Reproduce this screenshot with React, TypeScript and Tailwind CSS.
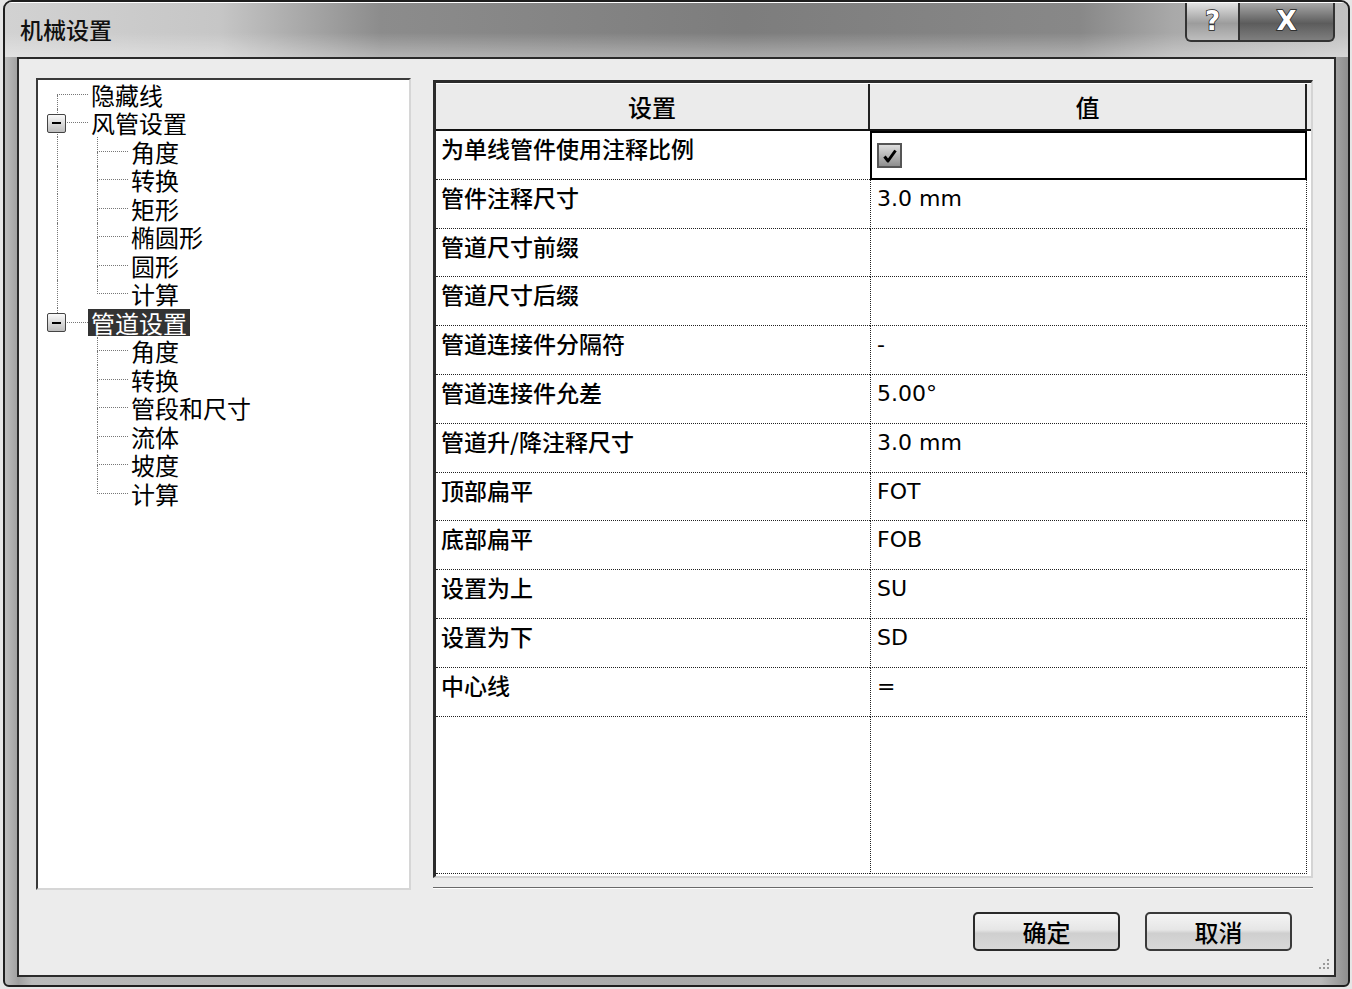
import React from "react";

// tree rows for the left panel
type TreeRow = {
  label: string;
  depth: number;
  top?: boolean; // vertical line goes up
  bottom?: boolean; // vertical line goes down
  parentLine?: boolean; // root line keeps running on depth-1 rows
  box?: boolean;
  selected?: boolean;
};

const treeRows: TreeRow[] = [
  { label: "隐藏线", depth: 0, top: false, bottom: true },
  { label: "风管设置", depth: 0, top: true, bottom: true, box: true },
  { label: "角度", depth: 1, top: true, bottom: true, parentLine: true },
  { label: "转换", depth: 1, top: true, bottom: true, parentLine: true },
  { label: "矩形", depth: 1, top: true, bottom: true, parentLine: true },
  { label: "椭圆形", depth: 1, top: true, bottom: true, parentLine: true },
  { label: "圆形", depth: 1, top: true, bottom: true, parentLine: true },
  { label: "计算", depth: 1, top: true, bottom: false, parentLine: true },
  { label: "管道设置", depth: 0, top: true, bottom: false, box: true, selected: true },
  { label: "角度", depth: 1, top: true, bottom: true },
  { label: "转换", depth: 1, top: true, bottom: true },
  { label: "管段和尺寸", depth: 1, top: true, bottom: true },
  { label: "流体", depth: 1, top: true, bottom: true },
  { label: "坡度", depth: 1, top: true, bottom: true },
  { label: "计算", depth: 1, top: true, bottom: false },
];

const settings = [
  { name: "为单线管件使用注释比例", value: "check" },
  { name: "管件注释尺寸", value: "3.0 mm" },
  { name: "管道尺寸前缀", value: "" },
  { name: "管道尺寸后缀", value: "" },
  { name: "管道连接件分隔符", value: "-" },
  { name: "管道连接件允差", value: "5.00°" },
  { name: "管道升/降注释尺寸", value: "3.0 mm" },
  { name: "顶部扁平", value: "FOT" },
  { name: "底部扁平", value: "FOB" },
  { name: "设置为上", value: "SU" },
  { name: "设置为下", value: "SD" },
  { name: "中心线", value: "=" },
];

const cjk = "font-['Noto_Sans_CJK_SC','Noto_Sans_CJK_JP',sans-serif]";

const ExpandBox = () => (
  <div className="absolute left-[-10px] top-[5px] w-[19px] h-[19px] rounded-[2px] border border-[#444] bg-[linear-gradient(180deg,#fafafa,#bdbdbd)] flex items-center justify-center">
    <div className="w-[9px] h-[2px] bg-black" />
  </div>
);

const Tree = () => (
  <div className="w-[375px] h-[812px] bg-white border-2 border-t-[#3a3a3a] border-l-[#3a3a3a] border-r-[#d6d6d6] border-b-[#d6d6d6]">
    {treeRows.map((r, i) => (
      <div key={i} className="flex h-[28.5px]">
        <div className="w-[19px] shrink-0" />
        {r.depth === 1 && (
          <div
            className={`w-[40px] shrink-0 ${r.parentLine ? "border-l border-dotted border-[#777]" : ""}`}
          />
        )}
        <div className="relative w-[31px] shrink-0 flex flex-col">
          <div
            className={`flex-1 border-b border-dotted border-[#777] ${r.top ? "border-l" : ""}`}
          />
          <div className={`flex-1 border-dotted border-[#777] ${r.bottom ? "border-l" : ""}`} />
          {r.box && <ExpandBox />}
        </div>
        <div className="flex items-center">
          <span
            className={`${cjk} inline-block text-[24px] leading-[27px] px-[3px] ${
              r.selected ? "bg-[#333] text-white" : "text-black"
            }`}
          >
            {r.label}
          </span>
        </div>
      </div>
    ))}
  </div>
);

const CheckBox = () => (
  <div className="mt-[10px] ml-[5px] w-[25px] h-[25px] border-2 border-[#555] bg-[linear-gradient(180deg,#dedede,#8e8e8e)] flex items-center justify-center">
    <svg width="16" height="16" viewBox="0 0 16 16">
      <path d="M2.5 8.5 L6 13 L13.5 2.5" fill="none" stroke="#000" strokeWidth="3" strokeLinejoin="round" />
    </svg>
  </div>
);

const SettingsTable = () => (
  <div className="w-[880px] h-[798px] mt-[2px] flex flex-col border-l-[3px] border-t-[3px] border-r-2 border-b-2 border-l-[#2b2b2b] border-t-[#2b2b2b] border-r-[#d4d4d4] border-b-[#d4d4d4] bg-white">
    <div className="flex h-[48px] shrink-0 bg-[#ebebeb] border-b-2 border-[#111] border-t border-t-white">
      <div className={`w-[434px] border-r-2 border-[#222] flex items-center justify-center ${cjk} text-[24px] font-medium text-black`}>
        设置
      </div>
      <div className={`w-[437px] border-r-2 border-[#222] flex items-center justify-center ${cjk} text-[24px] font-medium text-black`}>
        值
      </div>
    </div>
    {settings.map((s, i) => (
      <div key={i} className="flex h-[48.8px] shrink-0">
        <div className={`w-[434px] border-b border-dotted border-[#222] pl-[5px] pt-[1px] ${cjk} text-[23px] font-medium leading-[32px] text-black`}>
          {s.name}
        </div>
        {i === 0 ? (
          <div className="w-[437px] border-2 border-black">
            <CheckBox />
          </div>
        ) : (
          <div className="w-[437px] border-l border-r border-b border-dotted border-[#222] pl-[6px] pt-[1px] font-['DejaVu_Sans','Noto_Sans_CJK_SC',sans-serif] text-[22px] leading-[36px] text-black">
            {s.value}
          </div>
        )}
      </div>
    ))}
    <div className="flex flex-1 mb-[2px]">
      <div className="w-[434px] border-b border-dotted border-[#222]" />
      <div className="w-[437px] border-l border-r border-b border-dotted border-[#222]" />
    </div>
  </div>
);

const DlgButton = ({ label, primary }: { label: string; primary?: boolean }) => (
  <button
    className={`w-[147px] h-[39px] rounded-[5px] ${
      primary ? "border-2 border-[#2a2a2a]" : "border-2 border-[#3a3a3a]"
    } bg-[linear-gradient(180deg,#f4f4f4_0%,#e6e6e6_45%,#cfcfcf_55%,#d8d8d8_100%)] ${cjk} text-[24px] font-medium leading-none text-black flex items-center justify-center`}
  >
    {label}
  </button>
);

const CaptionButtons = () => (
  <div className="flex self-start">
    <div className="w-[55px] h-[39px] border-2 border-t-0 border-[#333] rounded-bl-[6px] bg-[linear-gradient(180deg,#e2e2e2,#9c9c9c_55%,#bdbdbd)] flex items-center justify-center">
      <span className="font-['DejaVu_Sans',sans-serif] text-[26px] font-bold text-white [-webkit-text-stroke:1.5px_#222] [paint-order:stroke_fill]">?</span>
    </div>
    <div className="w-[95px] h-[39px] border-2 border-l-0 border-t-0 border-[#333] rounded-br-[6px] bg-[linear-gradient(180deg,#a8a8a8,#5c5c5c_55%,#7e7e7e)] flex items-center justify-center">
      <span className="font-['DejaVu_Sans',sans-serif] text-[26px] font-bold text-white [-webkit-text-stroke:1.5px_#222] [paint-order:stroke_fill]">X</span>
    </div>
  </div>
);

export default function App() {
  return (
    <div className="w-[1352px] h-[989px] bg-[#e6e6e6] pl-[3px] overflow-hidden">
      <div className="w-[1347px] h-[987px] flex flex-col border-2 border-[#1e1e1e] rounded-t-[9px] rounded-b-[6px] bg-[linear-gradient(90deg,#bdbdbd_0%,#9f9f9f_1%,#b9b9b9_2%,#a9a9a9_50%,#b9b9b9_98%,#8f8f8f_100%)] overflow-hidden">
        {/* title bar */}
        <div className="h-[55px] shrink-0 flex justify-between pl-[15px] pr-[13px] border-t border-white bg-[linear-gradient(180deg,rgba(255,255,255,0)_55%,rgba(255,255,255,0.35)_100%),linear-gradient(90deg,#d2d2d2_0%,#c6c6c6_16%,#8c8c8c_28%,#7d7d7d_55%,#888888_80%,#a9a9a9_87%,#c2c2c2_100%)]">
          <div className={`${cjk} text-[23px] font-medium text-[#111] pt-[9px]`}>机械设置</div>
          <CaptionButtons />
        </div>
        {/* client area */}
        <div className="mx-[12px] h-[920px] border-2 border-[#2a2a2a] bg-[#ececec] flex pl-[17px] pt-[19px]">
          <Tree />
          <div className="ml-[22px] w-[880px] flex flex-col">
            <SettingsTable />
            <div className="mt-[9px] h-[2px] border-t border-[#6a6a6a] border-b border-b-white" />
            <div className="mt-[23px] flex justify-end gap-[25px] pr-[21px]">
              <DlgButton label="确定" primary />
              <DlgButton label="取消" />
            </div>
          </div>
          <div className="flex-1 flex flex-col justify-end items-end pr-[4px] pb-[4px]">
            <svg width="14" height="14" viewBox="0 0 14 14">
              {[
                [11, 2],
                [11, 6],
                [7, 6],
                [11, 10],
                [7, 10],
                [3, 10],
              ].map(([x, y], k) => (
                <rect key={k} x={x} y={y} width="2" height="2" fill="#999" />
              ))}
            </svg>
          </div>
        </div>
      </div>
    </div>
  );
}
